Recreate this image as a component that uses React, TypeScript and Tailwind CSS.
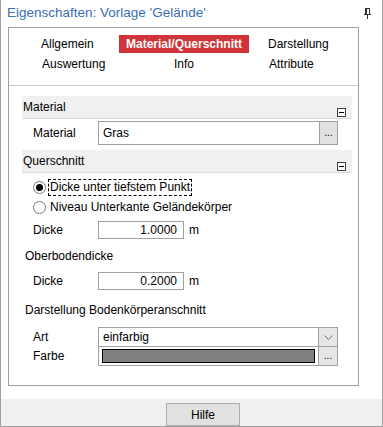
import React from "react";

const font = { fontFamily: '"Liberation Sans", Arial, sans-serif' };

function MinusBox() {
  return (
    <div className="mb-[1px] mr-[6px] flex h-[9px] w-[9px] items-center justify-center border border-[#404040] bg-white">
      <div className="h-[1px] w-[5px] bg-black" />
    </div>
  );
}

function GroupHeader({ title }: { title: string }) {
  return (
    <div className="flex h-[23px] items-end justify-between border-b border-[#dcdcdc] bg-[#f0f0f0]">
      <span className="self-center pl-[1px]">{title}</span>
      <MinusBox />
    </div>
  );
}

function Radio({ checked }: { checked?: boolean }) {
  return (
    <div className="flex h-[13px] w-[13px] items-center justify-center rounded-full border border-[#7a7a7a] bg-white">
      {checked && <div className="h-[7px] w-[7px] rounded-full bg-black" />}
    </div>
  );
}

function NumberRow({ value, className }: { value: string; className: string }) {
  return (
    <div className={"flex items-center " + className}>
      <span className="w-[76px] pl-[11px]">Dicke</span>
      <div className="flex h-[18px] w-[86px] items-center justify-end border border-[#a0a0a0] pr-[6px]">
        {value}
      </div>
      <span className="pl-[5px]">m</span>
    </div>
  );
}

function Chevron() {
  return (
    <svg width="9" height="5" viewBox="0 0 9 5">
      <polyline points="0.5,0.5 4.5,4.5 8.5,0.5" fill="none" stroke="#707070" strokeWidth="1" />
    </svg>
  );
}

export default function App() {
  return (
    <div
      className="flex h-[427px] w-[383px] flex-col border-x border-b border-[#a0a0a0] bg-white text-[12px] text-black"
      style={font}
    >
      {/* title bar */}
      <div className="flex h-[27px] items-center justify-between pl-[6px] pr-[10px]">
        <span className="text-[13.5px] text-[#3a6db2]">Eigenschaften: Vorlage 'Gelände'</span>
        <svg width="8" height="11" viewBox="0 0 8 11" className="mb-[1px]">
          <rect x="1.5" y="0.5" width="4" height="6" fill="none" stroke="#333" />
          <line x1="2.5" y1="1" x2="2.5" y2="6" stroke="#333" />
          <line x1="0" y1="6.5" x2="7" y2="6.5" stroke="#333" />
          <line x1="3.5" y1="7" x2="3.5" y2="11" stroke="#333" />
        </svg>
      </div>

      {/* panel */}
      <div className="ml-[7px] flex h-[359px] w-[351px] flex-col border border-[#a0a0a0]">
        {/* tabs */}
        <div className="h-[58px] border-b border-[#c8c8c8] pt-[7px]">
          <div className="grid grid-cols-[110px_130px_1fr] grid-rows-[18px_22px] items-center">
            <span className="pl-[32px]">Allgemein</span>
            <span className="flex h-[18px] items-center justify-center bg-[#d13438] font-bold text-white">
              Material/Querschnitt
            </span>
            <span className="pl-[19px]">Darstellung</span>
            <span className="pl-[33px]">Auswertung</span>
            <span className="text-center">Info</span>
            <span className="pl-[20px]">Attribute</span>
          </div>
        </div>

        {/* content */}
        <div className="ml-[13px] mr-[6px] flex flex-col pt-[10px]">
          <GroupHeader title="Material" />
          <div className="mt-[2px] flex h-[24px] items-center">
            <span className="w-[76px] pl-[11px]">Material</span>
            <div className="flex h-[24px] w-[240px] border border-[#a0a0a0]">
              <div className="flex flex-1 items-center pl-[4px]">Gras</div>
              <div className="flex w-[18px] items-center justify-center border-l border-[#a0a0a0] bg-[#e1e1e1] pb-[2px] text-[10px]">
                ...
              </div>
            </div>
          </div>

          <div className="mt-[5px]">
            <GroupHeader title="Querschnitt" />
          </div>
          <div className="mt-[4px] flex h-[20px] items-center pl-[11px]">
            <Radio checked />
            <span className="ml-[2px] border border-dashed border-black px-[1px] leading-[15px]">
              Dicke unter tiefstem Punkt
            </span>
          </div>
          <div className="flex h-[20px] items-center pl-[11px]">
            <Radio />
            <span className="ml-[4px]">Niveau Unterkante Geländekörper</span>
          </div>
          <NumberRow value="1.0000" className="mt-[4px]" />

          <div className="mt-[9px] flex h-[16px] items-center pl-[3px]">Oberbodendicke</div>
          <NumberRow value="0.2000" className="mt-[8px]" />

          <div className="mt-[12px] flex h-[16px] items-center pl-[3px]">Darstellung Bodenkörperanschnitt</div>

          <div className="mt-[9px] flex">
            <div className="flex w-[76px] flex-col pl-[11px]">
              <span className="flex h-[19px] items-center">Art</span>
              <span className="flex h-[19px] items-center">Farbe</span>
            </div>
            <div className="flex w-[240px] flex-col border border-[#a0a0a0]">
              <div className="flex h-[19px] border-b border-[#a0a0a0]">
                <div className="flex flex-1 items-center pl-[4px]">einfarbig</div>
                <div className="flex w-[19px] items-center justify-center border-l border-[#a0a0a0] bg-[#e6e6e6]">
                  <Chevron />
                </div>
              </div>
              <div className="flex h-[18px]">
                <div className="flex flex-1 items-center px-[3px]">
                  <div className="h-[14px] w-full border border-black bg-[#808080]" />
                </div>
                <div className="flex w-[19px] items-center justify-center border-l border-[#a0a0a0] bg-[#e6e6e6] pb-[2px] text-[10px]">
                  ...
                </div>
              </div>
            </div>
          </div>
        </div>
      </div>

      <div className="h-[13px]" />

      {/* footer */}
      <div className="flex flex-1 items-end bg-[#f0f0f0]">
        <button className="ml-[165px] h-[23px] w-[74px] border border-[#adadad] bg-[#e1e1e1] text-[12px]">
          Hilfe
        </button>
      </div>
    </div>
  );
}
